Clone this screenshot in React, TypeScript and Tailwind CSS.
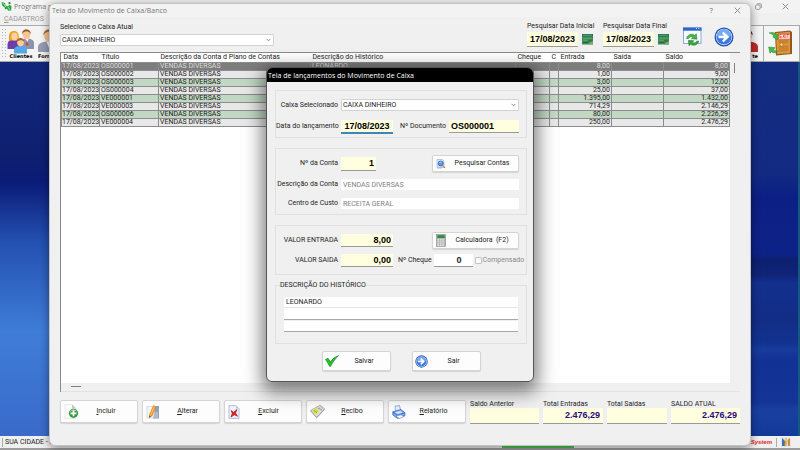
import type { ReactNode } from 'react'

type Row = {
    titulo: string
    historico?: string
    entrada: string
    saldo: string
}

const rows: Row[] = [
    { titulo: 'OS000001', historico: 'LEONARDO', entrada: '8,00', saldo: '8,00' },
    { titulo: 'OS000002', entrada: '1,00', saldo: '9,00' },
    { titulo: 'OS000003', entrada: '3,00', saldo: '12,00' },
    { titulo: 'OS000004', entrada: '25,00', saldo: '37,00' },
    { titulo: 'VE000001', entrada: '1.395,00', saldo: '1.432,00' },
    { titulo: 'VE000003', entrada: '714,29', saldo: '2.146,29' },
    { titulo: 'OS000006', entrada: '80,00', saldo: '2.226,29' },
    { titulo: 'VE000004', entrada: '250,00', saldo: '2.476,29' },
]

const boldInput = "min-w-0 border-b bg-[#ffffdf] font-['Liberation_Sans',sans-serif] text-[9px] leading-none font-bold outline-none"
const plainInput = 'w-full min-w-0 bg-white px-[2px] text-[7px] leading-none outline-none'
const buttonBase = 'flex items-center rounded-[2px] border border-[#d4d4d4] bg-[#fdfdfd] shadow-[0_1px_1px_rgba(0,0,0,0.12)]'

/* ---------- icons ---------- */

function CloseIcon() {
    return (
        <svg className="size-[7px]" viewBox="0 0 7 7" stroke="#777" strokeWidth="0.8" fill="none">
            <path d="M.7.7l5.6 5.6M6.3.7L.7 6.3" />
        </svg>
    )
}

function RestoreIcon() {
    return (
        <svg className="size-[7px]" viewBox="0 0 7 7" stroke="#888" strokeWidth="0.8" fill="none">
            <rect x=".6" y="1.9" width="4.5" height="4.5" rx="1" />
            <path d="M2 .7h3.2a1.2 1.2 0 011.2 1.2V5" />
        </svg>
    )
}

function ArrowIcon({ className }: { className: string }) {
    return (
        <svg className={className} viewBox="0 0 20 20">
            <circle cx="10" cy="10" r="9.5" fill="#2450b4" />
            <circle cx="10" cy="10" r="8.2" fill="#eaf3ff" />
            <circle cx="10" cy="10" r="7.6" fill="#3b7be0" />
            <path d="M3 9a7 7 0 0114 0c-3 1.500-10 1.500-14 0z" fill="#78aaf2" />
            <path d="M4.500 8.700h5.800L8 6.200l1.600-1.500L15.300 10l-5.700 5.300L8 13.800l2.300-2.500H4.500z" fill="#fff" />
        </svg>
    )
}

function RefreshWindowIcon() {
    return (
        <svg className="h-5 w-[19px]" viewBox="0 0 19 20">
            <rect x=".5" y="1" width="17.500" height="15.500" fill="#f7fbff" stroke="#86a9de" />
            <rect x="0" y=".5" width="18.500" height="3.200" fill="#2e66cf" />
            <path d="M13 1.500h1M15.300 1.500h1" stroke="#fff" strokeWidth=".8" />
            <path d="M3.500 11.500c.8-4 5.200-5.500 8.200-3.300l1.600-1.400.7 5.400-5.600-.4 1.600-1.500c-2-1.200-3.800-.6-4.500 1.200z" fill="#46b648" stroke="#1c7d26" strokeWidth=".5" />
            <path d="M15.800 14c-.8 4-5.200 5.500-8.200 3.300L6 18.800l-.7-5.500 5.600.5-1.600 1.400c2 1.300 3.800.7 4.500-1.200z" fill="#38a33c" stroke="#1c7d26" strokeWidth=".5" />
        </svg>
    )
}

function CalendarIcon() {
    return (
        <svg className="size-[11px]" viewBox="0 0 11 11">
            <rect width="11" height="10.500" fill="#3a8a52" />
            <rect width="11" height="2.500" fill="#2b6f57" />
            <path d="M1 1.300h9" stroke="#79c08d" strokeWidth=".6" />
            <path d="M1 4.200h9M1 6.200h5" stroke="#5fb273" strokeWidth=".8" />
            <path d="M6 10.500l5-4.500v4.500z" fill="#8aa86c" />
            <path d="M6 7h5M1 8.500h5" stroke="#1f5a4a" strokeWidth=".7" />
        </svg>
    )
}

function AddFileIcon() {
    return (
        <svg className="h-[15px] w-[15px]" viewBox="0 0 15 15">
            <path d="M1 .5h7.500l3.500 3.500v10.500H1z" fill="#fbfbfb" stroke="#ddd" strokeWidth=".6" />
            <path d="M8 .5l4 4H8z" fill="#c4c8cc" />
            <circle cx="9.500" cy="9.300" r="4.600" fill="#33963b" />
            <path d="M5.500 8c1.500-3.500 6-3.500 7.700-.5-2.500-.8-5.200-.8-7.700.5z" fill="#8ed283" />
            <path d="M9.500 6.300v6M6.500 9.300h6" stroke="#fff" strokeWidth="1.700" />
        </svg>
    )
}

function EditIcon() {
    return (
        <svg className="size-[14px]" viewBox="0 0 14 14">
            <rect x="1" y="1.500" width="9" height="11.500" fill="#f3f5f8" stroke="#c3cad4" strokeWidth=".6" />
            <path d="M9.500 1h3.500v12.500H7z" fill="#93a2b5" />
            <path d="M7 8h5M6 10h6M4 12h8" stroke="#d9e0e8" strokeWidth=".8" />
            <path d="M7.500.5l2.600 1.200-4 9-2.900 2 .4-3.400z" fill="#f59a1b" stroke="#c66c0a" strokeWidth=".4" />
            <path d="M8.400 1.500L4.700 10" stroke="#ffd37a" strokeWidth=".8" />
            <path d="M3.400 10.800l-.2 1.900 1.600-1.100z" fill="#443" />
        </svg>
    )
}

function DeleteIcon() {
    return (
        <svg className="h-[14px] w-[12px]" viewBox="0 0 12 14">
            <path d="M1 .6h7l3 3v9.800H1z" fill="#edf2fb" stroke="#9fb1d4" strokeWidth=".8" />
            <path d="M8 .6v3h3z" fill="#b7c6e2" />
            <path d="M3 5.500l2.500 1.800L9 4.500 7.500 8l2 3.200-3.200-1.500L3 12l1.300-3.700z" fill="#e3231c" stroke="#b51410" strokeWidth=".7" />
        </svg>
    )
}

function ReceiptIcon() {
    return (
        <svg className="size-[15px]" viewBox="0 0 15 15">
            <path d="M.5 6.500L10 1.200l4.700 3.500-8 8.600z" fill="#dfe2dc" stroke="#868a84" strokeWidth=".6" />
            <path d="M.5 6.500l6.200 6.800 8-8.600v1l-7.900 8.600L.6 7.600z" fill="#9c9f9a" />
            <path d="M2 6.600l4-2.200L9 7.300 6 10.500z" fill="#d9df3e" />
            <path d="M4 6.500l3 2.200M7.500 4l4.500 2" stroke="#848b38" strokeWidth=".7" />
            <circle cx="11" cy="4" r="1.200" fill="#fff" stroke="#8c8c8c" strokeWidth=".5" />
        </svg>
    )
}

function PrinterIcon() {
    return (
        <svg className="size-[14px]" viewBox="0 0 14 14">
            <path d="M3 1.200L7.500.5l1.200 5-5 1.200z" fill="#e8f1ff" stroke="#6f94d8" strokeWidth=".7" />
            <path d="M.8 6.800l8-2.300 4.200 3.200v3l-7.500 2.700L.8 10z" fill="#7ea8ec" stroke="#315fb9" strokeWidth=".7" />
            <path d="M.8 6.800l4.800 3.400L13 7.700" stroke="#315fb9" strokeWidth=".7" fill="none" />
            <path d="M3 7.200l5-1.300 2.600 1.600-4.800 1.500z" fill="#d7e6ff" />
            <path d="M4 11.200l4.500-1.400 3.500 1.700-4.500 2z" fill="#fff" stroke="#5580cf" strokeWidth=".6" />
        </svg>
    )
}

function SearchDocIcon() {
    return (
        <svg className="size-[10px]" viewBox="0 0 10 10">
            <path d="M1 .5h5.500L8 2v6.500H1z" fill="#dfe9fb" stroke="#8fa7d6" strokeWidth=".6" />
            <circle cx="4.700" cy="4.500" r="2.500" fill="#5b9bea" stroke="#3457a8" strokeWidth=".8" />
            <path d="M3.500 4a1.500 1.500 0 012-1" stroke="#dff0ff" strokeWidth=".7" fill="none" />
            <path d="M6.600 6.500l2.400 2.400" stroke="#c58f3b" strokeWidth="1.300" />
            <path d="M1 9.200h5" stroke="#9bb" strokeWidth=".6" />
        </svg>
    )
}

function CalculatorIcon() {
    return (
        <svg className="h-[13px] w-[10px]" viewBox="0 0 10 13">
            <rect x=".4" y=".4" width="9.200" height="12.200" fill="#b4b7b6" stroke="#8b8e8d" strokeWidth=".6" />
            <rect x="1.300" y="1.200" width="7.400" height="2.800" fill="#2a8f3e" />
            <path d="M1.500 5.900h7M1.500 7.900h7M1.500 9.900h7M1.500 11.600h7" stroke="#eef0ef" strokeWidth="1" strokeDasharray="1.500 .9" />
        </svg>
    )
}

function CheckIcon() {
    return (
        <svg className="h-[12px] w-[14px]" viewBox="0 0 14 12">
            <path d="M.5 4.500L3 3.200l2.300 3.600C7.500 4 10 2 13.600.6 10.500 3.500 8 7 5.700 11.300H4.500C3.500 9 2 6.500.5 4.500z" fill="#22c32d" stroke="#0c7a17" strokeWidth=".6" />
        </svg>
    )
}

function LogoIcon() {
    return (
        <svg className="size-[11px]" viewBox="0 0 11 11">
            <path d="M.5 1l3.500 1 .5 2.500 2.500 1L8 4l2.500.8-.3 4.700-2.700.3-1.700-2L4 8.500 3.500 6 1.500 5z" fill="#27a63f" />
            <path d="M2 2l3 4M7 6l2 3" stroke="#b9ecbf" strokeWidth=".8" />
            <circle cx="8.500" cy="2.200" r="1.100" fill="#1b8b31" />
        </svg>
    )
}

function ClientsIcon() {
    return (
        <svg className="h-[26px] w-[28px]" viewBox="0 0 28 26">
            <path d="M13 21v-6c0-3 3-4.500 7-4.500s7 1.500 7 4.500v6z" fill="#8d93ab" />
            <path d="M18.500 10.500l1.500 5 1.700-5z" fill="#fff" />
            <path d="M19.800 11.500l-.8 5 1.200 1.500 1-1.500z" fill="#c9452e" />
            <ellipse cx="19.500" cy="6" rx="4" ry="4.800" fill="#f6c391" />
            <path d="M15.200 6C14.500 0 24 0 23.800 6c-1-2-2.500-2.800-4.300-2.800S16 4 15.200 6z" fill="#8b5526" />
            <path d="M.5 21v-4c0-4 2.500-5.500 6-5.500s6 1.500 6 5.500v4z" fill="#6b3fa8" />
            <path d="M2 12.500C1 3.500 5 2.500 7.500 3c4 .5 5 4 4 9.500z" fill="#e8a51f" />
            <ellipse cx="7.500" cy="8.500" rx="3.200" ry="4" fill="#fbd1a4" />
            <path d="M7 25.500V22c0-3 3-4 6.500-4s6.500 1 6.500 4v3.500z" fill="#55a8e8" />
            <ellipse cx="13.500" cy="14.200" rx="3.400" ry="4" fill="#f9cb9b" />
            <path d="M9.800 14c-.5-5.500 7.800-5.500 7.400 0-1.500-2.300-5-2.500-7.400 0z" fill="#a4642b" />
        </svg>
    )
}

function PersonIcon({ red }: { red?: boolean }) {
    return (
        <svg className="h-[26px] w-[22px]" viewBox="0 0 22 26">
            <path d="M0 24v-5c0-4 5-5.500 11-5.500S22 15 22 19v5z" fill={red ? '#c02a2a' : '#959cb0'} />
            <path d="M8.500 13.500L11 20l2.500-6.500z" fill="#fff" />
            <ellipse cx="11" cy="7.500" rx="5" ry="6.500" fill="#f4c18f" />
            <path d="M5.500 7.500C4.500-.5 17.500-.5 16.500 7.500 15 4.500 13 3.800 11 3.800S7 4.500 5.500 7.500z" fill={red ? '#3b2218' : '#a46f35'} />
        </svg>
    )
}

function ExitIcon() {
    return (
        <svg className="h-[26px] w-[26px] shrink-0" viewBox="0 0 26 26">
            <path d="M7 2l15-1.500 2 1.500v22L8 25.500z" fill="#8f5a1c" />
            <path d="M8 3l14-1.200v21.500L9 24z" fill="#dd9a3c" />
            <path d="M10.500 10l10-.4v3.900l-10 .3zM10.500 15.500l10-.2v6l-10 .7z" fill="#c98230" />
            <rect x="10.500" y="4" width="11.500" height="5" fill="#fff" stroke="#d33" strokeWidth=".5" />
            <text x="16.300" y="8.200" textAnchor="middle" fontSize="4.500" fontWeight="700" fontFamily="Liberation Sans, sans-serif" fill="#e01515">EXIT</text>
            <circle cx="13.500" cy="14.500" r="1.500" fill="#f6dc7a" stroke="#8a5b15" strokeWidth=".4" />
            <path d="M1 3c4-1.500 6.500 0 7.500 2l1.700-.7-.8 5.500-4.700-3 1.500-.6C5 5 3.500 3.500 1 3z" fill="#43bb45" stroke="#1d8127" strokeWidth=".5" />
            <path d="M10 21.500c-2.500 2-5 1.500-6.500.3L2 23.200.7 17l6.300.7-1.500 1.500c1.300 1.500 2.700 2.200 4.500 2.300z" fill="#43bb45" stroke="#1d8127" strokeWidth=".5" />
        </svg>
    )
}

function UsersToolIcon() {
    return (
        <svg className="size-[10px] shrink-0" viewBox="0 0 10 10">
            <rect width="10" height="10" fill="#dfe6f3" />
            <path d="M1 1l3 3v5H1z" fill="#3f6fc4" />
            <path d="M4 1.500h2L5.500 9H3.500z" fill="#e2a42d" />
            <path d="M6.500 3L9 1v8H7z" fill="#d4902a" />
            <circle cx="5" cy="3" r="1.300" fill="#f1c77c" />
        </svg>
    )
}

/* ---------- building blocks ---------- */

function ComboBox({ id, value, className }: { id: string; value: string; className?: string }) {
    return (
        <div className={`relative ${className ?? ''}`}>
            <select id={id} className="block h-3 w-full appearance-none rounded-[1px] border border-[#d2d2d2] bg-white px-[1px] text-[7px] leading-none outline-none">
                <option>{value}</option>
            </select>
            <svg className="pointer-events-none absolute top-1 right-[3px] h-1 w-[5px]" viewBox="0 0 5 4" fill="none" stroke="#666" strokeWidth=".7">
                <path d="M.5.8l2 2 2-2" />
            </svg>
        </div>
    )
}

function DateField({ id, label }: { id: string; label: string }) {
    return (
        <div className="w-[69px]">
            <label htmlFor={id} className="block leading-[8px] whitespace-nowrap">{label}</label>
            <div className="mt-[2px] flex items-center gap-1">
                <input id={id} className={`${boldInput} h-[15px] w-[51px] border-[#9a9a9a] px-[2px] text-center text-black`} defaultValue="17/08/2023" />
                <button aria-label={label}><CalendarIcon /></button>
            </div>
        </div>
    )
}

function ActionButton({ icon, label }: { icon: ReactNode; label: string }) {
    return (
        <button className={`${buttonBase} h-[23px] w-[78px] pl-[3px]`}>
            {icon}
            <span className="flex-1 pr-1 text-center"><u>{label[0]}</u>{label.slice(1)}</span>
        </button>
    )
}

function TotalField({ id, label, value, className }: { id: string; label: string; value?: string; className: string }) {
    return (
        <div className={className}>
            <label htmlFor={id} className="block leading-[8px] whitespace-nowrap">{label}</label>
            <input id={id} className={`${boldInput} block h-4 w-full border-[#9a9a9a] pr-[3px] pb-[2px] text-right text-[#2a0a80]`} defaultValue={value} readOnly />
        </div>
    )
}

function DialogLabel({ id, children }: { id: string; children: ReactNode }) {
    return <label htmlFor={id} className="w-[65px] shrink-0 pr-[3px] text-right whitespace-nowrap">{children}</label>
}

function Grid() {
    return (
        <div className="flex min-h-0 flex-1 flex-col border-t border-l border-[#8a8a8a]">
            <div className="flex min-h-0 flex-1">
                <div className="min-w-0 flex-1 bg-white">
                    <table className="w-full table-fixed border-collapse text-[7px] leading-[7px] whitespace-nowrap">
                        <colgroup>
                            <col className="w-[38px]" />
                            <col className="w-[59px]" />
                            <col className="w-[152px]" />
                            <col />
                            <col className="w-[34px]" />
                            <col className="w-[9px]" />
                            <col className="w-[53px]" />
                            <col className="w-[52px]" />
                            <col className="w-[66px]" />
                        </colgroup>
                        <thead>
                            <tr className="h-[9px] text-left [&>th]:p-0 [&>th]:pl-[2px] [&>th]:font-normal">
                                <th>Data</th>
                                <th>Título</th>
                                <th>Descrição da Conta d Plano de Contas</th>
                                <th>Descrição do Histórico</th>
                                <th>Cheque</th>
                                <th>C</th>
                                <th>Entrada</th>
                                <th>Saída</th>
                                <th>Saldo</th>
                            </tr>
                        </thead>
                        <tbody>
                            {rows.map((row, i) => (
                                <tr
                                    key={row.titulo}
                                    className={`h-2 [&>td]:border [&>td]:border-[#8c8c8c] [&>td]:px-px [&>td]:py-0 [&>td:first-child]:px-0 ${i === 0 ? 'bg-[#7d7d7d] text-[#dcdcdc]' : i % 2 === 0 ? 'bg-[#c1d8c3]' : 'bg-[#e8e8e8]'}`}
                                >
                                    <td>17/08/2023</td>
                                    <td>{row.titulo}</td>
                                    <td>VENDAS DIVERSAS</td>
                                    <td>{row.historico}</td>
                                    <td></td>
                                    <td></td>
                                    <td className="text-right">{row.entrada}</td>
                                    <td></td>
                                    <td className="text-right">{row.saldo}</td>
                                </tr>
                            ))}
                        </tbody>
                    </table>
                </div>
                <div className="w-[10px] pt-[10px] pl-1">
                    <div className="h-[10px] w-px bg-[#808080]" />
                </div>
            </div>
            <div className="h-[9px] border-b border-[#e2e2e2] pt-[3px] pl-[10px]">
                <div className="h-px w-[10px] bg-[#808080]" />
            </div>
        </div>
    )
}

function CashWindow() {
    return (
        <section className="absolute inset-x-[49px] top-[3px] bottom-1 flex flex-col rounded-[6px] border border-[#c4c4c4] bg-[#f0f0f0] shadow-[0_2px_10px_rgba(0,0,0,0.45)]">
            <header className="flex h-[13px] items-center rounded-t-[6px] bg-[#f3f3f3] pr-[9px] pl-[2px] text-[#777]">
                <h1 className="flex-1 font-['Open_Sans',sans-serif] text-[7px]">Tela do Movimento de Caixa/Banco</h1>
                <button className="mr-[21px] text-[8px] leading-none">?</button>
                <button aria-label="Fechar"><CloseIcon /></button>
            </header>
            <div className="flex h-[35px] items-start pr-4 pl-[10px]">
                <div className="w-[214px] pt-[6px]">
                    <label htmlFor="caixa" className="block leading-[8px]">Selecione o Caixa Atual</label>
                    <ComboBox id="caixa" value="CAIXA DINHEIRO" className="mt-[3px]" />
                </div>
                <div className="ml-auto flex gap-[7px] pt-[5px]">
                    <DateField id="inicio" label="Pesquisar Data Inicial" />
                    <DateField id="fim" label="Pesquisar Data Final" />
                </div>
                <button aria-label="Atualizar" className="mt-[10px] ml-[11px]"><RefreshWindowIcon /></button>
                <button aria-label="Avançar" className="mt-[10px] ml-3"><ArrowIcon className="size-5" /></button>
            </div>
            <main className="flex min-h-0 flex-1 flex-col px-[10px]">
                <Grid />
            </main>
            <footer className="flex h-[53px] items-start gap-1 px-[10px] pt-2">
                <ActionButton icon={<AddFileIcon />} label="Incluir" />
                <ActionButton icon={<EditIcon />} label="Alterar" />
                <ActionButton icon={<DeleteIcon />} label="Excluir" />
                <ActionButton icon={<ReceiptIcon />} label="Recibo" />
                <ActionButton icon={<PrinterIcon />} label="Relatório" />
                <div className="ml-auto flex gap-1">
                    <TotalField id="anterior" label="Saldo Anterior" className="w-[69px]" />
                    <TotalField id="entradas" label="Total Entradas" value="2.476,29" className="w-[60px]" />
                    <TotalField id="saidas" label="Total Saídas" className="w-[60px]" />
                    <TotalField id="atual" label="SALDO ATUAL" value="2.476,29" className="w-[69px]" />
                </div>
            </footer>
        </section>
    )
}

function EntryDialog() {
    return (
        <section role="dialog" aria-labelledby="titulo-dialogo" className="absolute top-[67px] left-1/2 w-[268px] -translate-x-1/2 overflow-hidden rounded-[6px] border border-[#555] bg-[#f0f0f0] shadow-[0_6px_18px_4px_rgba(0,0,0,0.5)]">
            <header className="flex h-[14px] items-center bg-black px-px">
                <h2 id="titulo-dialogo" className="font-['Open_Sans',sans-serif] text-[7px] text-white">Tela de lançamentos do Movimento de Caixa</h2>
            </header>
            <form className="pt-2 pr-[6px] pb-[10px] pl-2">
                <div className="space-y-[9px] border border-[#e0e0e0] pt-2 pr-[7px] pb-1">
                    <div className="flex items-center">
                        <DialogLabel id="selecionado">Caixa Selecionado</DialogLabel>
                        <ComboBox id="selecionado" value="CAIXA DINHEIRO" className="flex-1" />
                    </div>
                    <div className="flex items-center">
                        <DialogLabel id="data">Data do lançamento</DialogLabel>
                        <input id="data" className={`${boldInput} h-[13px] w-[52px] border-[#3f86b5] px-[2px] text-center text-black shadow-[0_1px_0_#3f86b5]`} defaultValue="17/08/2023" />
                        <label htmlFor="documento" className="ml-auto pr-[3px]">Nº Documento</label>
                        <input id="documento" className={`${boldInput} h-[13px] w-[70px] border-[#9a9a9a] px-[2px] text-black`} defaultValue="OS000001" />
                    </div>
                </div>

                <div className="mt-[10px] border border-[#e0e0e0] pt-[6px] pr-[7px] pb-[5px]">
                    <div className="flex items-center">
                        <DialogLabel id="conta">Nº da Conta</DialogLabel>
                        <input id="conta" className={`${boldInput} h-[14px] w-[35px] border-[#9a9a9a] px-[2px] text-right text-black`} defaultValue="1" />
                        <button type="button" className={`${buttonBase} ml-auto h-[17px] w-[87px] pl-[3px]`}>
                            <SearchDocIcon />
                            <span className="flex-1 text-center">Pesquisar Contas</span>
                        </button>
                    </div>
                    <div className="mt-[7px] flex items-center">
                        <DialogLabel id="descricao">Descrição da Conta</DialogLabel>
                        <input id="descricao" className={`${plainInput} h-[11px] text-[#808080]`} defaultValue="VENDAS DIVERSAS" readOnly />
                    </div>
                    <div className="mt-2 flex items-center">
                        <DialogLabel id="custo">Centro de Custo</DialogLabel>
                        <input id="custo" className={`${plainInput} h-[11px] text-[#808080]`} defaultValue="RECEITA GERAL" readOnly />
                    </div>
                </div>

                <div className="mt-[10px] space-y-1 border border-[#e0e0e0] py-[6px]">
                    <div className="flex items-center pr-[7px]">
                        <DialogLabel id="entrada">VALOR ENTRADA</DialogLabel>
                        <input id="entrada" className={`${boldInput} h-[13px] w-[52px] border-[#9a9a9a] px-[2px] text-right text-black`} defaultValue="8,00" />
                        <button type="button" className={`${buttonBase} ml-auto h-[17px] w-[87px] pl-[3px]`}>
                            <CalculatorIcon />
                            <span className="flex-1 text-center whitespace-pre">Calculadora  (F2)</span>
                        </button>
                    </div>
                    <div className="flex h-[15px] items-center">
                        <DialogLabel id="saida">VALOR SAIDA</DialogLabel>
                        <input id="saida" className={`${boldInput} h-[13px] w-[52px] shrink-0 border-[#9a9a9a] px-[2px] text-right text-black`} defaultValue="0,00" />
                        <label htmlFor="cheque" className="pr-[2px] pl-[5px] whitespace-nowrap">Nº Cheque</label>
                        <input id="cheque" className="h-[13px] w-[39px] shrink-0 border-b border-[#9a9a9a] bg-white pr-[11px] text-right font-['Liberation_Sans',sans-serif] text-[9px] leading-none font-bold outline-none" defaultValue="0" />
                        <label className="flex items-center gap-px pl-[2px] text-[#888]">
                            <input type="checkbox" disabled className="size-[7px] shrink-0 appearance-none rounded-[1px] border border-[#c4c4c4] bg-[#f8f8f8]" />
                            Compensado
                        </label>
                    </div>
                </div>

                <fieldset className="mt-[6px] border border-[#e0e0e0] pr-2 pb-[11px] pl-2">
                    <legend className="-ml-1 leading-[8px]">DESCRIÇÃO DO HISTÓRICO</legend>
                    <input aria-label="Histórico linha 1" className={`${plainInput} mt-2 block h-[11px] border-b border-[#e6e6e6]`} defaultValue="LEONARDO" />
                    <input aria-label="Histórico linha 2" className={`${plainInput} block h-3 border-b border-[#a8a8a8]`} />
                    <input aria-label="Histórico linha 3" className={`${plainInput} mt-px block h-[11px] border-b border-[#a8a8a8]`} />
                </fieldset>

                <div className="mt-[7px] flex justify-center gap-[21px]">
                    <button type="button" className={`${buttonBase} h-5 w-[69px] pl-[2px]`}>
                        <CheckIcon />
                        <span className="flex-1 text-center">Salvar</span>
                    </button>
                    <button type="button" className={`${buttonBase} h-5 w-[69px] pl-[2px]`}>
                        <ArrowIcon className="size-[13px]" />
                        <span className="flex-1 text-center">Sair</span>
                    </button>
                </div>
            </form>
        </section>
    )
}

export default function App() {
    return (
        <div className="relative flex h-screen flex-col overflow-hidden bg-[#f0f0f0] font-[Roboto,'Liberation_Sans',sans-serif] text-[7px] leading-[9px] text-[#1c1c1c]">
            <header className="flex h-[13px] items-center bg-[#f3f3f3] pr-[11px] pl-px font-['Open_Sans',sans-serif] text-[#777]">
                <LogoIcon />
                <span className="flex-1 pl-[2px] text-[7px]">Programa p</span>
                <button aria-label="Restaurar" className="mr-5"><RestoreIcon /></button>
                <button aria-label="Fechar programa"><CloseIcon /></button>
            </header>
            <nav className="flex h-3 items-center pl-1 text-[#999]">
                <button><u>C</u>ADASTROS</button>
            </nav>
            <div className="flex h-[37px] border-y border-[#a9a9a9] bg-[#f4f4f4] font-['DejaVu_Sans',sans-serif] text-[5px] leading-[5px] font-bold text-black">
                <div className="my-[2px] ml-px w-[5px] bg-[radial-gradient(#b5b5b5_1px,transparent_1px)] bg-[size:3px_3px]" />
                <button className="flex w-[30px] flex-col items-center pt-[2px]"><ClientsIcon />Clientes</button>
                <button className="flex w-[22px] flex-col items-start pt-[2px] pl-[2px]"><PersonIcon />Forn</button>
                <button className="ml-auto flex w-[22px] flex-col items-end border-r border-[#a9a9a9] pt-[2px] pr-[5px]"><PersonIcon red />te</button>
                <button aria-label="Sair do programa" className="flex w-[36px] justify-center border-r border-[#a9a9a9] pt-1 pr-[2px]"><ExitIcon /></button>
            </div>
            <div className="flex flex-1 border-r-2 border-[#14597f]">
                <div className="flex-1 bg-[linear-gradient(to_bottom,#12287c,#0f1f70_26%,#0b1b78_32%,#2450b0_48%,#3f7dd8_72%,#3a6acb)]" />
                <div className="flex-1 bg-[linear-gradient(to_bottom,#142d80,#122a82_30%,#0c1f84_36%,#0d2288_51%,#0d2070_53%,#0f2478_57%,#13308f_59%,#132d86_69%,#123290_75%,#173b9c_77%,#123194_80%,#143498_91%,#1a409f_93%,#12389a)]" />
            </div>
            <footer className="flex h-[14px] items-center border-b-2 border-[#9d9d9d] bg-[#f0f0f0]">
                <span className="ml-[2px] w-5/8 border-l border-[#aaa] pl-[2px] whitespace-nowrap">SUA CIDADE - L</span>
                <div className="h-full w-[9%] bg-[#4ccb4c]" />
                <span className="ml-auto border-r border-[#aaa] pr-1 font-['Liberation_Sans',sans-serif] text-[6px] font-bold text-[#e0262b] italic">System</span>
                <span className="pr-[9px] pl-1"><UsersToolIcon /></span>
            </footer>
            <CashWindow />
            <EntryDialog />
        </div>
    )
}
